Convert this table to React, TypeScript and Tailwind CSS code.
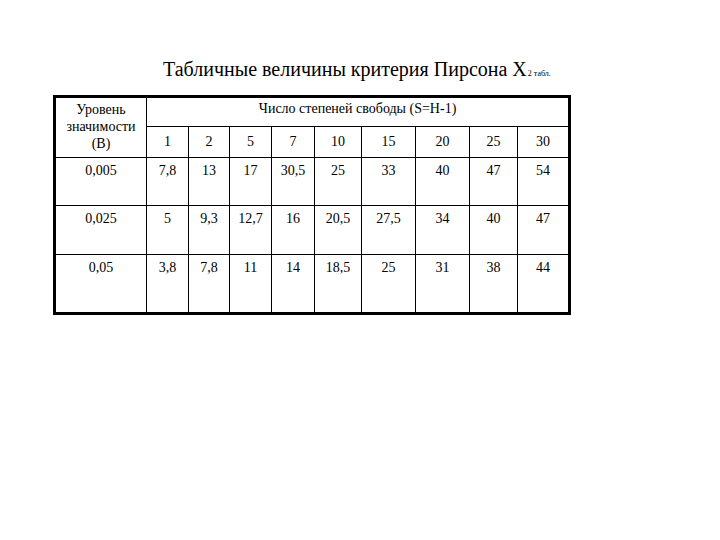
const degrees = ["1", "2", "5", "7", "10", "15", "20", "25", "30"]

const rows = [
  { level: "0,005", values: ["7,8", "13", "17", "30,5", "25", "33", "40", "47", "54"], h: "h-[48px]" },
  { level: "0,025", values: ["5", "9,3", "12,7", "16", "20,5", "27,5", "34", "40", "47"], h: "h-[49px]" },
  { level: "0,05", values: ["3,8", "7,8", "11", "14", "18,5", "25", "31", "38", "44"], h: "h-[59px]" },
]

const colWidths = ["w-[92px]", "w-[42px]", "w-[41px]", "w-[42px]", "w-[43px]", "w-[47px]", "w-[54px]", "w-[54px]", "w-[48px]", "w-[52px]"]

export default function App() {
  return (
    <div className="w-[720px] h-[540px] bg-white text-black font-['Liberation_Serif',serif]">
      <div className="pt-[57px] pl-[163px] text-[20px] leading-[24px] whitespace-nowrap">
        Табличные величины критерия Пирсона X
        <span className="text-[8px] align-[0px] ml-[1px]">2 табл.</span>
      </div>

      <div className="pl-[53px] pt-[9px]">
        <table className="border-collapse border-[3px] border-black table-fixed w-[517px] text-[14px] leading-[16px]">
          <colgroup>
            {colWidths.map((w, i) => (
              <col key={i} className={w} />
            ))}
          </colgroup>
          <thead>
            <tr className="h-[30px]">
              <th rowSpan={2} className="border border-black font-normal align-middle text-center px-0 pb-[3px] leading-[17px]">
                <div>Уровень</div>
                <div>значимости</div>
                <div>(В)</div>
              </th>
              <th colSpan={9} className="border border-black font-normal text-center pb-[6px]">
                Число степеней свободы (S=H-1)
              </th>
            </tr>
            <tr className="h-[31px]">
              {degrees.map((d) => (
                <th key={d} className="border border-black font-normal text-center">
                  {d}
                </th>
              ))}
            </tr>
          </thead>
          <tbody>
            {rows.map((r) => (
              <tr key={r.level} className={r.h}>
                <td className="border border-black text-center align-top pt-[5px]">{r.level}</td>
                {r.values.map((v, i) => (
                  <td key={i} className="border border-black text-center align-top pt-[5px]">
                    {v}
                  </td>
                ))}
              </tr>
            ))}
          </tbody>
        </table>
      </div>
    </div>
  )
}
